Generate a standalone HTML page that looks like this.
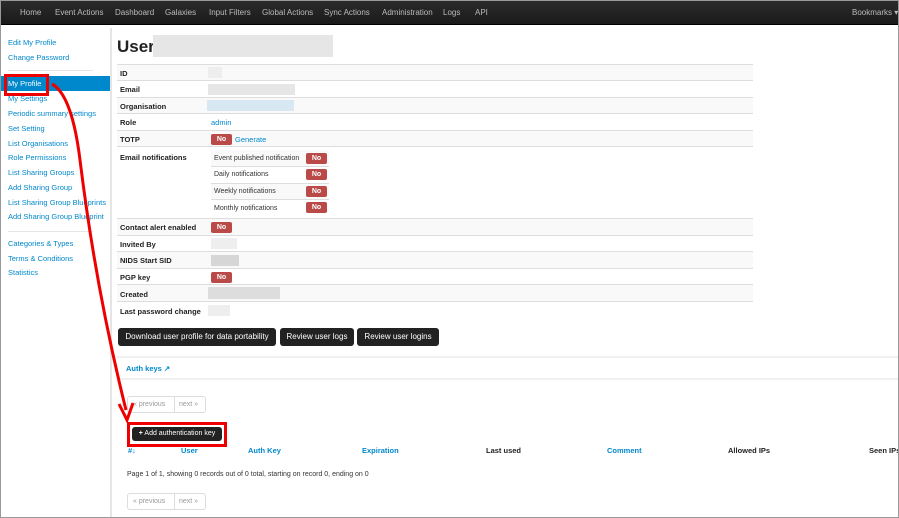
<!DOCTYPE html><html><head><style>
*{margin:0;padding:0;box-sizing:border-box}
body{width:899px;height:518px;overflow:hidden;background:#fff;font-family:"Liberation Sans",sans-serif;font-size:8px;color:#333;position:relative}
.a{position:absolute;white-space:nowrap}
.nav{left:0;top:0;width:899px;height:25px;background:linear-gradient(#2c2c2c,#1a1a1a);border-bottom:1px solid #000}
.nav span{position:absolute;top:8px;color:#bbb;font-size:8px}
.sl{position:absolute;left:8px;color:#0088cc;font-size:7.5px;white-space:nowrap}
.row{position:absolute;left:117px;width:636px;border-top:1px solid #ddd}
.lab{position:absolute;left:3px;font-weight:bold;font-size:7.5px;color:#222;white-space:nowrap}
.no{position:absolute;background:#b94a48;color:#fff;font-weight:bold;font-size:7px;width:21px;height:11px;border-radius:2px;text-align:center;line-height:11px}
.blur{position:absolute;background:#e6e6e6}
.btn{position:absolute;top:328px;height:18px;background:#222;color:#fff;font-size:8px;line-height:18px;text-align:center;border-radius:3px;white-space:nowrap}
.pg{position:absolute;left:127px;width:79px;height:17px;border:1px solid #ddd;border-radius:3px;font-size:7px;color:#999}
.pg span{position:absolute;top:4px;white-space:nowrap}
.th{position:absolute;top:446px;font-weight:bold;font-size:7.5px;color:#0088cc;white-space:nowrap}
.nt{position:absolute;left:3px;font-size:7px;white-space:nowrap}
</style></head><body>
<div class="a nav">
<span style="left:20px">Home</span><span style="left:55px">Event Actions</span><span style="left:115px">Dashboard</span><span style="left:165px">Galaxies</span><span style="left:209px">Input Filters</span><span style="left:262px">Global Actions</span><span style="left:324px">Sync Actions</span><span style="left:382px">Administration</span><span style="left:443px">Logs</span><span style="left:475px">API</span><span style="left:852px">Bookmarks ▾</span>
</div>
<div class="a" style="left:110px;top:28px;width:2px;height:490px;background:#e5e5e5"></div>
<div class="sl" style="top:38px">Edit My Profile</div>
<div class="sl" style="top:53px">Change Password</div>
<div class="a" style="left:8px;top:70px;width:85px;height:1px;background:#e5e5e5"></div>
<div class="a" style="left:0;top:76px;width:110px;height:15px;background:#0088cc"></div>
<div class="sl" style="top:79px;color:#fff">My Profile</div>
<div class="sl" style="top:94px">My Settings</div>
<div class="sl" style="top:109px">Periodic summary settings</div>
<div class="sl" style="top:124px">Set Setting</div>
<div class="sl" style="top:139px">List Organisations</div>
<div class="sl" style="top:153px">Role Permissions</div>
<div class="sl" style="top:168px">List Sharing Groups</div>
<div class="sl" style="top:183px">Add Sharing Group</div>
<div class="sl" style="top:198px">List Sharing Group Blueprints</div>
<div class="sl" style="top:212px">Add Sharing Group Blueprint</div>
<div class="a" style="left:8px;top:231px;width:85px;height:1px;background:#e5e5e5"></div>
<div class="sl" style="top:239px">Categories &amp; Types</div>
<div class="sl" style="top:254px">Terms &amp; Conditions</div>
<div class="sl" style="top:268px">Statistics</div>
<div class="a" style="left:117px;top:37px;font-size:17px;font-weight:bold;color:#222">User</div>
<div class="blur" style="left:153px;top:35px;width:180px;height:22px"></div>

<div class="row" style="top:64px;height:16px;background:#f9f9f9"><div class="lab" style="top:4px">ID</div><div class="blur" style="left:91px;top:2px;width:14px;height:11px;background:#eee"></div></div>
<div class="row" style="top:80px;height:17px"><div class="lab" style="top:4px">Email</div><div class="blur" style="left:91px;top:3px;width:87px;height:11px"></div></div>
<div class="row" style="top:97px;height:16px;background:#f9f9f9"><div class="lab" style="top:4px">Organisation</div><div class="blur" style="left:90px;top:2px;width:87px;height:11px;background:#d8e8f3"></div></div>
<div class="row" style="top:113px;height:17px"><div class="lab" style="top:4px">Role</div><div class="a" style="left:94px;top:4px;color:#0088cc;font-size:7.5px">admin</div></div>
<div class="row" style="top:130px;height:16px;background:#f9f9f9"><div class="lab" style="top:4px">TOTP</div><div class="no" style="left:94px;top:3px">No</div><div class="a" style="left:118px;top:4px;color:#0088cc;font-size:7.5px">Generate</div></div>
<div class="row" style="top:146px;height:72px"><div class="lab" style="top:6px">Email notifications</div>
<div class="a" style="left:94px;top:3px;width:118px;height:66px">
<div class="a" style="left:0;top:0;width:118px;height:16px;background:#f9f9f9"></div>
<div class="nt" style="top:5px">Event published notification</div><div class="no" style="left:95px;top:3px">No</div>
<div class="a" style="left:0;top:16px;width:118px;border-top:1px solid #ddd"></div>
<div class="nt" style="top:21px">Daily notifications</div><div class="no" style="left:95px;top:19px">No</div>
<div class="a" style="left:0;top:33px;width:118px;height:16px;background:#f9f9f9;border-top:1px solid #ddd"></div>
<div class="nt" style="top:38px">Weekly notifications</div><div class="no" style="left:95px;top:36px">No</div>
<div class="a" style="left:0;top:49px;width:118px;border-top:1px solid #ddd"></div>
<div class="nt" style="top:55px">Monthly notifications</div><div class="no" style="left:95px;top:52px">No</div>
</div></div>
<div class="row" style="top:218px;height:17px;background:#f9f9f9"><div class="lab" style="top:4px">Contact alert enabled</div><div class="no" style="left:94px;top:3px">No</div></div>
<div class="row" style="top:235px;height:16px"><div class="lab" style="top:4px">Invited By</div><div class="blur" style="left:94px;top:2px;width:26px;height:11px;background:#eee"></div></div>
<div class="row" style="top:251px;height:17px;background:#f9f9f9"><div class="lab" style="top:4px">NIDS Start SID</div><div class="blur" style="left:94px;top:3px;width:28px;height:11px;background:#d6d6d6"></div></div>
<div class="row" style="top:268px;height:16px"><div class="lab" style="top:4px">PGP key</div><div class="no" style="left:94px;top:3px">No</div></div>
<div class="row" style="top:284px;height:17px;background:#f9f9f9"><div class="lab" style="top:5px">Created</div><div class="blur" style="left:91px;top:2px;width:72px;height:12px;background:#ddd"></div></div>
<div class="row" style="top:301px;height:17px;border-bottom:none"><div class="lab" style="top:5px">Last password change</div><div class="blur" style="left:91px;top:3px;width:22px;height:11px;background:#eee"></div></div>

<div class="btn" style="left:118px;width:158px">Download user profile for data portability</div>
<div class="btn" style="left:280px;width:74px">Review user logs</div>
<div class="btn" style="left:357px;width:82px">Review user logins</div>
<div class="a" style="left:117px;top:356px;width:782px;height:2px;background:#f0f0f0"></div>
<div class="a" style="left:126px;top:364px;font-size:7.5px;font-weight:bold;color:#0088cc">Auth keys ↗</div>
<div class="a" style="left:117px;top:378px;width:782px;height:2px;background:#f0f0f0"></div>
<div class="pg" style="top:396px"><span style="left:5px">« previous</span><div class="a" style="left:46px;top:0;width:1px;height:15px;background:#ddd"></div><span style="left:51px">next »</span></div>
<div class="a" style="left:132px;top:427px;width:90px;height:14px;background:#222;border-radius:3px;color:#fff;font-size:7px;line-height:14px;text-align:center"><b>+</b> Add authentication key</div>
<div class="a" style="left:127px;top:422px;width:100px;height:25px;border:3px solid #e00"></div>
<div class="th" style="left:128px">#↓</div><div class="th" style="left:181px">User</div><div class="th" style="left:248px">Auth Key</div><div class="th" style="left:362px">Expiration</div><div class="th" style="left:486px;color:#222">Last used</div><div class="th" style="left:607px">Comment</div><div class="th" style="left:728px;color:#222">Allowed IPs</div><div class="th" style="left:869px;color:#222">Seen IPs</div>
<div class="a" style="left:127px;top:471px;font-size:7px">Page 1 of 1, showing 0 records out of 0 total, starting on record 0, ending on 0</div>
<div class="pg" style="top:493px"><span style="left:5px">« previous</span><div class="a" style="left:46px;top:0;width:1px;height:15px;background:#ddd"></div><span style="left:51px">next »</span></div>
<div class="a" style="left:4px;top:74px;width:45px;height:22px;border:3px solid #e00"></div>
<svg class="a" style="left:0;top:0" width="899" height="518"><path d="M52 84 Q72 95 80 160 Q96 290 126 410" fill="none" stroke="#e00" stroke-width="3"/><path d="M119 404 L127 420 L133 403" fill="none" stroke="#e00" stroke-width="3"/></svg>
<div class="a" style="left:0;top:0;width:899px;height:518px;border:1px solid #999"></div>
</body></html>
